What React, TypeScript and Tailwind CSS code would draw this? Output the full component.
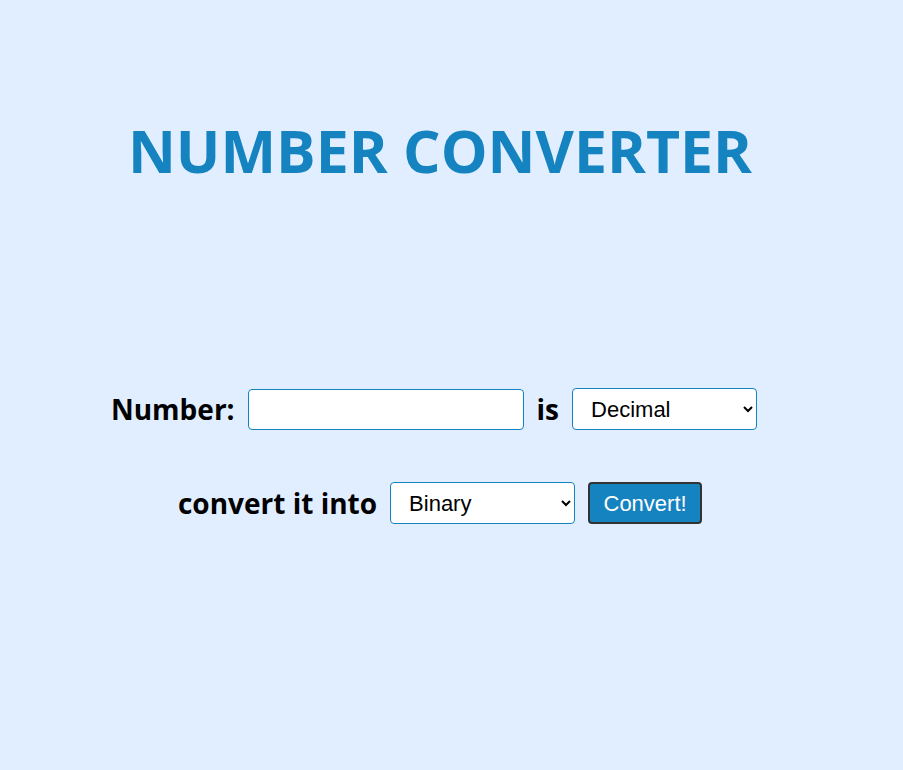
import { useState } from "react";

const options = ["Decimal", "Binary", "Octal", "Hexadecimal"];

const App = () => {
    const [num, setNum] = useState("");
    const [from, setFrom] = useState("Decimal");
    const [to, setTo] = useState("Binary");

    return (
        <div className="min-h-[770px] w-full bg-[#e0eeff] font-['Open_Sans',sans-serif]">
            <div className="w-[880px] flex flex-col items-center">
                <h1 className="pt-[110px] text-[59px] leading-[80px] font-bold text-[#1483c0]">
                    NUMBER CONVERTER
                </h1>

                <div className="mt-[198px] pr-[12px] flex items-center gap-[13px]">
                    <label className="text-[28px] font-bold text-black">Number:</label>
                    <input
                        value={num}
                        onChange={(e) => setNum(e.target.value)}
                        className="w-[276px] h-[41px] bg-white border border-[#1483c0] rounded-[4px] px-2 text-xl"
                    />
                    <span className="text-[28px] font-bold text-black">is</span>
                    <select
                        value={from}
                        onChange={(e) => setFrom(e.target.value)}
                        className="w-[185px] h-[42px] bg-white border border-[#1483c0] rounded-[4px] pl-[14px] text-[22px] font-['Liberation_Sans',sans-serif]"
                    >
                        {options.map((o) => <option key={o}>{o}</option>)}
                    </select>
                </div>

                <div className="mt-[52px] flex items-center gap-[13px]">
                    <span className="text-[28px] font-bold text-black">convert it into</span>
                    <select
                        value={to}
                        onChange={(e) => setTo(e.target.value)}
                        className="w-[185px] h-[42px] bg-white border border-[#1483c0] rounded-[4px] pl-[14px] text-[22px] font-['Liberation_Sans',sans-serif]"
                    >
                        {options.map((o) => <option key={o}>{o}</option>)}
                    </select>
                    <button className="w-[114px] h-[42px] bg-[#1483c0] border-2 border-[#333] rounded-[4px] text-white text-[22px] font-['Liberation_Sans',sans-serif]">
                        Convert!
                    </button>
                </div>
            </div>
        </div>
    );
};

export default App;
